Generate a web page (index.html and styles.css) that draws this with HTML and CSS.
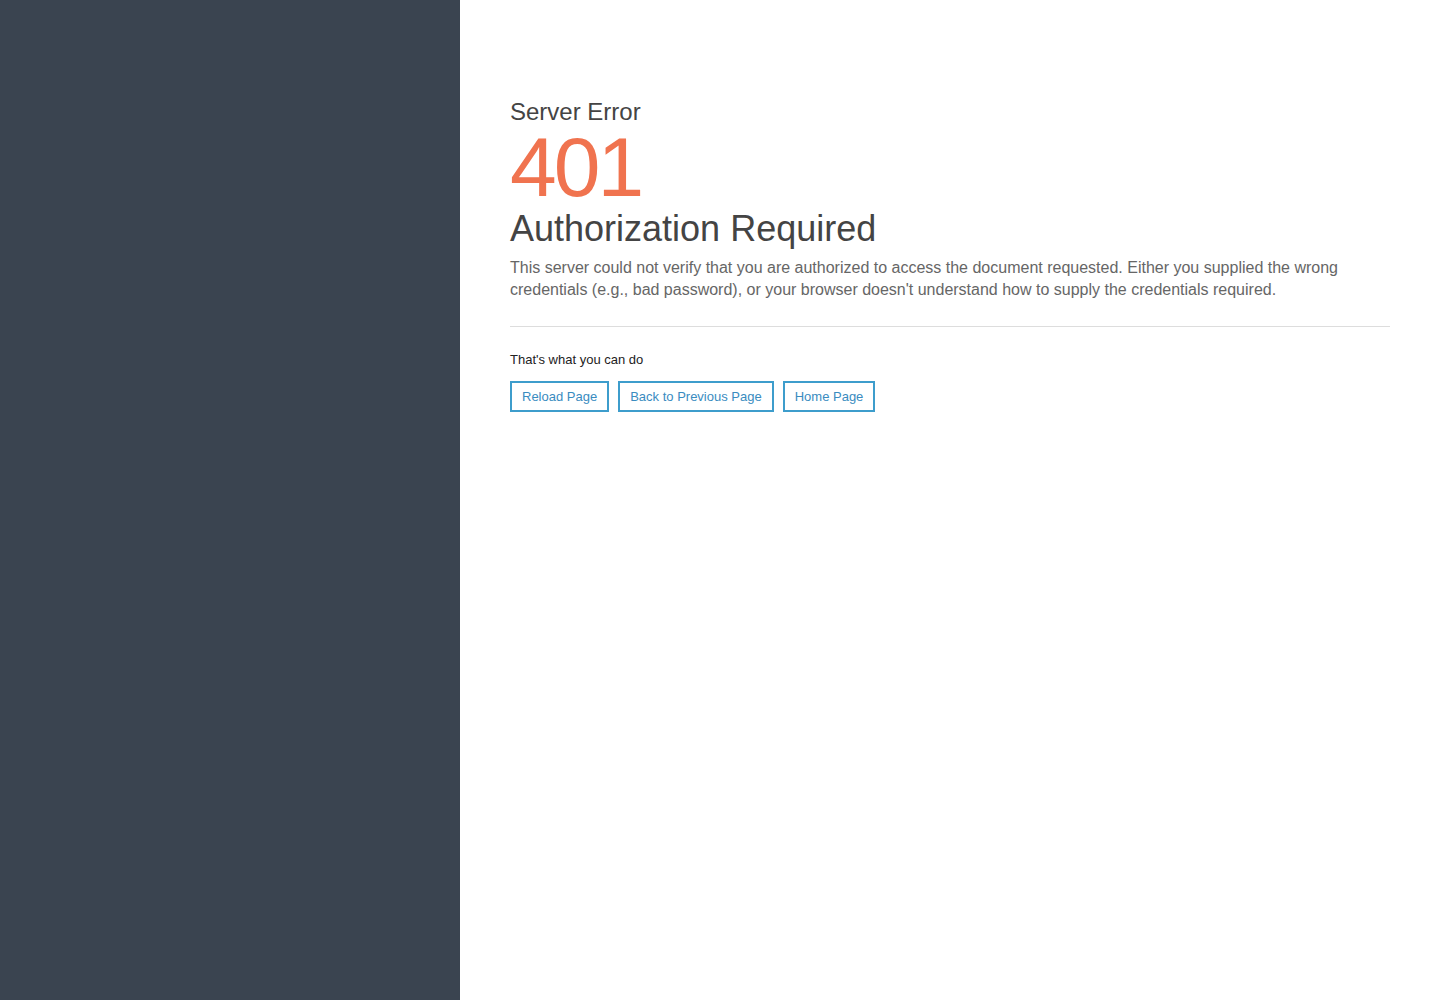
FILE: index.html
```html
<!DOCTYPE html>
<html lang="en">

<head>
    <meta charset="UTF-8">
    <meta name="viewport" content="width=device-width, initial-scale=1.0">
    <title>401 Authorization Required</title>
    <link rel="stylesheet" href="styles.css">
</head>

<body>
    <div class="layout">
        <aside class="sidebar"></aside>
        <main class="content">
            <h2 class="error-label">Server Error</h2>
            <h1 class="error-code">401</h1>
            <h3 class="error-title">Authorization Required</h3>
            <p class="error-text">
                This server could not verify that you are authorized to access the document requested. Either you supplied the wrong credentials (e.g., bad password), or your browser doesn't understand how to supply the credentials required.
            </p>
            <hr class="divider">
            <p class="actions-label">That's what you can do</p>
            <div class="actions">
                <a href="" class="btn">Reload Page</a>
                <a href="" class="btn">Back to Previous Page</a>
                <a href="" class="btn">Home Page</a>
            </div>
        </main>
    </div>
</body>
</html>
```

FILE: styles.css
```css
body {
    margin: 0;
    font-family: "Liberation Sans", Arial, sans-serif;
    background-color: white;
}

.layout {
    display: flex;
    min-height: 1000px;
}

.sidebar {
    width: 460px;
    flex-shrink: 0;
    background-color: #3a4450;
}

.content {
    flex: 1;
    padding: 99px 50px 0 50px;
}

.error-label {
    margin: 0;
    font-size: 24px;
    font-weight: normal;
    line-height: 26px;
    color: #444;
}

.error-code {
    margin: 0;
    font-size: 84px;
    font-weight: normal;
    line-height: 84px;
    letter-spacing: -3px;
    color: #f0734f;
}

.error-title {
    margin: 0;
    font-size: 36px;
    font-weight: normal;
    line-height: 40px;
    color: #444;
}

.error-text {
    margin: 8px 0 0 0;
    font-size: 16px;
    line-height: 22px;
    color: #666;
}

.divider {
    margin: 25px 0 0 0;
    border: 0;
    border-top: 1px solid #ddd;
}

.actions-label {
    margin: 25px 0 0 0;
    font-size: 13px;
    line-height: 16px;
    color: #222;
}

.actions {
    display: flex;
    gap: 9px;
    margin-top: 13px;
}

.btn,
.btn:link,
.btn:visited {
    display: block;
    padding: 0 10px;
    height: 31px;
    line-height: 27px;
    box-sizing: border-box;
    border: 2px solid #3d9dcc;
    font-size: 13px;
    color: #3a8cbf;
    text-decoration: none;
}
```
